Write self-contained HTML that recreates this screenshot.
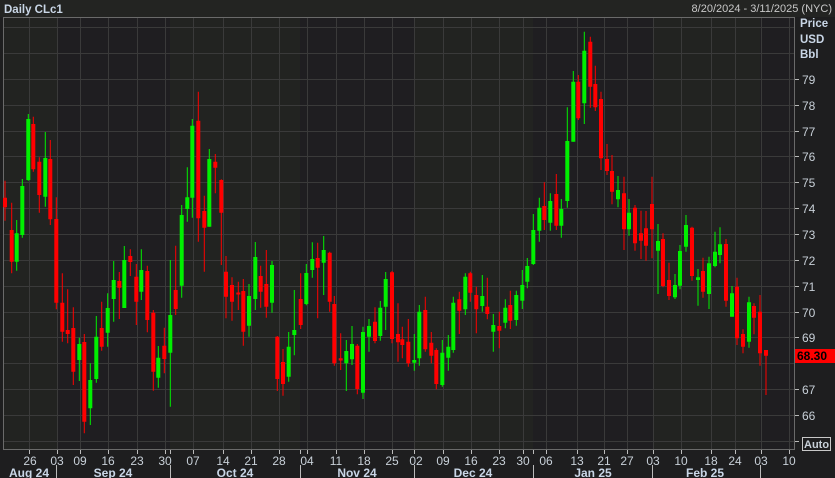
<!DOCTYPE html>
<html><head><meta charset="utf-8"><style>
html,body{margin:0;padding:0;background:#1e1e1f;width:835px;height:478px;overflow:hidden}
svg{display:block}
text{font-family:"Liberation Sans",sans-serif}
</style></head><body>
<svg width="835" height="478" viewBox="0 0 835 478" xmlns="http://www.w3.org/2000/svg">
<rect width="835" height="478" fill="#1e1e1f"/>
<rect x="0" y="0" width="835" height="17" fill="#232422"/>
<text x="4" y="13" font-size="11.5" font-weight="bold" fill="#c9d6e6">Daily CLc1</text>
<text x="832" y="12" font-size="11" fill="#c8c8c8" text-anchor="end">8/20/2024 - 3/11/2025 (NYC)</text>
<rect x="3" y="17" width="792" height="432" fill="#222321"/>
<rect x="57" y="17" width="113" height="432" fill="#1f1e21"/>
<rect x="300" y="17" width="114" height="432" fill="#1f1e21"/>
<rect x="533" y="17" width="120" height="432" fill="#1f1e21"/>
<rect x="760" y="17" width="35" height="432" fill="#1f1e21"/>
<g stroke="#3a3a3a" stroke-width="1">
<path d="M3 27.5H795M3 53.5H795M3 79.5H795M3 105.5H795M3 131.5H795M3 156.5H795M3 182.5H795M3 208.5H795M3 234.5H795M3 260.5H795M3 286.5H795M3 312.5H795M3 337.5H795M3 363.5H795M3 389.5H795M3 415.5H795M3 441.5H795"/>
<path d="M29.5 17V449M57.5 17V449M80.5 17V449M108.5 17V449M137.5 17V449M165.5 17V449M193.5 17V449M223.5 17V449M251.5 17V449M279.5 17V449M307.5 17V449M336.5 17V449M364.5 17V449M392.5 17V449M414.5 17V449M443.5 17V449M471.5 17V449M499.5 17V449M523.5 17V449M546.5 17V449M577.5 17V449M604.5 17V449M627.5 17V449M653.5 17V449M681.5 17V449M711.5 17V449M735.5 17V449M761.5 17V449M789.5 17V449"/>
</g>
<rect x="3.5" y="17.5" width="791" height="432" fill="none" stroke="#6a6a6a"/>
<g stroke-linecap="butt" fill="none">
<path stroke="#ff0000" stroke-width="1" d="M5 180.7V220.7M11.7 202.7V273.3M33.3 116.7V171.7M39.3 157.3V212.7M50.3 140V225M56.3 197.3V309.3M62.3 273.3V341.7M67.7 289.3V343.3M73.3 307.3V385M84.3 334V433.3M101.7 301.7V350.7M119.3 272V319M130.3 249.3V276M136.3 264V325M147.3 265.7V332.3M153.3 310V390.7M164.3 327.7V373.3M175.7 245.7V315M198.3 91.7V241.7M204.3 195.7V271.7M215.3 154V193.3M221.3 179.3V265M226 256V318.3M232 277.3V320.7M238.3 281.7V310M243.3 279V345.7M260.7 265.7V307.7M266.3 250V317.7M277.3 336V391M283 349V395.7M300.7 273.3V329M317.7 242.7V318.3M329.7 251.7V311.7M334.3 296V365.7M340.7 333.3V370M357.3 344V394.3M375 307.3V343.3M392 271V343.3M398 303.3V361.7M402.3 326.7V358.3M408.3 319V366.7M425.3 296.7V351.7M431.3 332V363.3M436.3 348.3V389.3M459.3 291.7V334M470.3 271.7V301.7M476.3 286.7V333.3M487.3 277.7V319.3M499.3 311.7V348.3M510.3 290.7V329M544.3 182.3V230M556.3 174V230M578.3 75V120M590.3 36.7V107.7M595.3 65.7V111M601 91.7V170M607 144V175M612 155V204.3M624 176.7V250M635 205V250.7M641 210.7V259M646 211V260.7M652 176.7V258.3M663 233.3V287.3M669 262.7V300M692 226.7V280.7M703 257.7V297.7M726 239V306.7M737 277.7V345M743 329.3V353.3M754 303.3V334.3M760 295V365.7M766 350V395"/>
<path stroke="#ff0000" stroke-width="4" d="M5 197.7V207.3M11.7 230V261.7M33.3 124V169.3M39.3 161.7V195M50.3 159V219.3M56.3 219V302.7M62.3 302.7V331.7M67.7 330V334M73.3 328V371.7M84.3 342V421.7M101.7 328V346.7M119.3 281V287.7M130.3 256V262M136.3 276.7V301.7M147.3 271V320M153.3 312.7V371.7M164.3 345.7V359M175.7 290V309M198.3 120.7V218.3M204.3 211V227.7M215.3 161.7V167.7M221.3 180V212.7M226 271.7V296.7M232 285V301.7M238.3 292.5V294.5M243.3 291V331.7M260.7 276V291.7M266.3 284V306.7M277.3 336.7V379M283 362V384M300.7 299V325M317.7 258V267.7M329.7 252.7V301.7M334.3 304V363.3M340.7 358.3V360.5M357.3 345.7V389M375 321.7V341M392 272.3V339M398 334V342.3M402.3 339.3V345M408.3 341.7V363.3M425.3 310V349.3M431.3 342.7V355.7M436.3 350V384M459.3 299.3V310.7M470.3 273.3V292.7M476.3 295V309.3M487.3 306.7V314M499.3 326V330.7M510.3 305V320.7M544.3 206V220M556.3 194V225.7M578.3 81.7V118.3M590.3 41.7V86.7M595.3 84V107.3M601 99V158.3M607 159V171M612 171V191.7M624 193.3V229.3M635 207.7V243.3M641 233.3V240.7M646 228.3V245.7M652 204V229.3M663 239V286M669 280V296M692 227.7V276M703 271V291.7M726 244V300.7M737 286.7V338.3M743 334V346.7M754 306V317.7M760 311.7V353.3M766 350V355.7"/>
<path stroke="#00f000" stroke-width="1" d="M16.7 220V270.7M22.3 179V237.7M28.3 114V180.7M45.3 132V206.7M79.3 337.7V381M90.3 363.3V425M96.3 316V382.7M107.7 293.3V346.7M113.7 261V321.7M124.3 246V308M141.3 249.3V300M158.3 346V387.7M170.3 260V406.7M181.7 205V297.7M187.3 167.3V221.7M192.3 119V217.7M209.3 149V226.7M249 284V336.7M255.3 242V310M272 261V312.7M288.7 332V381.7M294.3 290V355.3M306.3 264V305.3M312.3 242.3V277.7M323.7 236V295M346.3 340V391M352 326V365M363 326.7V399M369 319V351.7M380.3 301V340.7M385.7 272V330M414.3 334V370.7M419.3 305V365.7M442.3 340V386.7M448.3 335V370.7M453.3 296.7V352.7M465.3 273.3V315M482.3 275V311.7M493.3 314V351.7M505.3 299.3V328.3M516.3 290.7V325.7M522.3 270V309M527.3 258V288.3M533.3 214V265M539.3 197.7V241.7M550.3 193.3V230.7M561.3 199V237.7M567.3 107.3V207.7M573.3 71V141.7M584.3 31.7V124M618 176V207.3M629 199V235.7M658 224V294M675 274V299M680 245V289.3M686 215V251.7M698 269V305.7M709 256.7V309M715 231.7V267.3M720 227.3V263.3M732 286V316.7M749 296.7V347.7"/>
<path stroke="#00f000" stroke-width="4" d="M16.7 233.3V261.7M22.3 186V235M28.3 119V180M45.3 158V196.7M79.3 344V360M90.3 380V408.3M96.3 336.7V379M107.7 308V332.7M113.7 280V299M124.3 260V308M141.3 270V291.7M158.3 357.7V377.7M170.3 315V352.7M181.7 215V285.7M187.3 197.3V209M192.3 125.7V197.7M209.3 159V226.7M249 296V325.7M255.3 257V299M272 265V302.7M288.7 346.7V376.7M294.3 330V335M306.3 273V304M312.3 259V270M323.7 250V262.7M346.3 351V363.3M352 344V359.3M363 332V392.7M369 326V336.7M380.3 307.7V336M385.7 279V306.7M414.3 360V362.7M419.3 311.7V358.3M442.3 352.7V385M448.3 346.7V357.7M453.3 302.7V350M465.3 276.7V309.3M482.3 296V306M493.3 325V331.7M505.3 307.7V322.7M516.3 295V320M522.3 285V300.7M527.3 266V281.7M533.3 230V264M539.3 207.7V230.7M550.3 201V222.7M561.3 209V225.7M567.3 141V201M573.3 81.7V141.7M584.3 50.7V103.3M618 190V199.3M629 212.7V229.3M658 241V250.7M675 285V297.3M680 251V285.7M686 225V246.7M698 277.3V280M709 263.3V294M715 251.7V266M720 244.3V255M732 293.3V316.7M749 302.3V341.7"/>
</g>
<g fill="#c9d6e6" font-size="11.5" font-weight="bold">
<text x="800" y="27">Price</text><text x="800" y="43">USD</text><text x="800" y="58">Bbl</text>
</g>
<g stroke="#bbbbbb"><path d="M795 79.5H799M795 105.5H799M795 131.5H799M795 156.5H799M795 182.5H799M795 208.5H799M795 234.5H799M795 260.5H799M795 286.5H799M795 312.5H799M795 337.5H799M795 389.5H799M795 415.5H799M795 441.5H799"/></g>
<g fill="#c8d0d8" font-size="12">
<text x="802" y="84">79</text><text x="802" y="110">78</text><text x="802" y="136">77</text><text x="802" y="161">76</text><text x="802" y="187">75</text><text x="802" y="213">74</text><text x="802" y="239">73</text><text x="802" y="265">72</text><text x="802" y="291">71</text><text x="802" y="317">70</text><text x="802" y="342">69</text><text x="802" y="394">67</text><text x="802" y="420">66</text>
</g>
<rect x="795" y="349" width="40" height="14" fill="#ff0000"/>
<text x="797" y="360" font-size="12" font-weight="bold" fill="#000">68.30</text>
<rect x="802.5" y="437.5" width="28" height="13" fill="#1e1e1f" stroke="#c8c8c8"/>
<text x="804" y="448" font-size="11" font-weight="bold" fill="#c8d0d8">Auto</text>
<g stroke="#bbbbbb"><path d="M29.5 450V454M57.5 450V454M80.5 450V454M108.5 450V454M137.5 450V454M165.5 450V454M170.5 450V454M193.5 450V454M223.5 450V454M251.5 450V454M279.5 450V454M300.5 450V454M307.5 450V454M336.5 450V454M364.5 450V454M392.5 450V454M414.5 450V454M443.5 450V454M471.5 450V454M499.5 450V454M523.5 450V454M533.5 450V454M546.5 450V454M577.5 450V454M604.5 450V454M627.5 450V454M653.5 450V454M681.5 450V454M711.5 450V454M735.5 450V454M761.5 450V454M789.5 450V454"/>
<path d="M56.5 465V478M170.5 465V478M300.5 465V478M414.5 465V478M533.5 465V478M652.5 465V478M760.5 465V478"/></g>
<g fill="#c8d0d8" font-size="12" text-anchor="middle">
<text x="30" y="465">26</text><text x="57" y="465">03</text><text x="80" y="465">09</text><text x="108" y="465">16</text><text x="137" y="465">23</text><text x="165" y="465">30</text><text x="193" y="465">07</text><text x="223" y="465">14</text><text x="251" y="465">21</text><text x="279" y="465">28</text><text x="307" y="465">04</text><text x="336" y="465">11</text><text x="364" y="465">18</text><text x="392" y="465">25</text><text x="416" y="465">02</text><text x="443" y="465">09</text><text x="471" y="465">16</text><text x="499" y="465">23</text><text x="523" y="465">30</text><text x="546" y="465">06</text><text x="577" y="465">13</text><text x="604" y="465">21</text><text x="627" y="465">27</text><text x="653" y="465">03</text><text x="681" y="465">10</text><text x="711" y="465">18</text><text x="735" y="465">24</text><text x="761" y="465">03</text><text x="789" y="465">10</text>
</g>
<g fill="#c9d6e6" font-size="12" font-weight="bold" text-anchor="middle">
<text x="29" y="477">Aug 24</text><text x="113" y="477">Sep 24</text><text x="235" y="477">Oct 24</text><text x="357" y="477">Nov 24</text><text x="473" y="477">Dec 24</text><text x="593" y="477">Jan 25</text><text x="705" y="477">Feb 25</text>
</g>
</svg>
</body></html>
